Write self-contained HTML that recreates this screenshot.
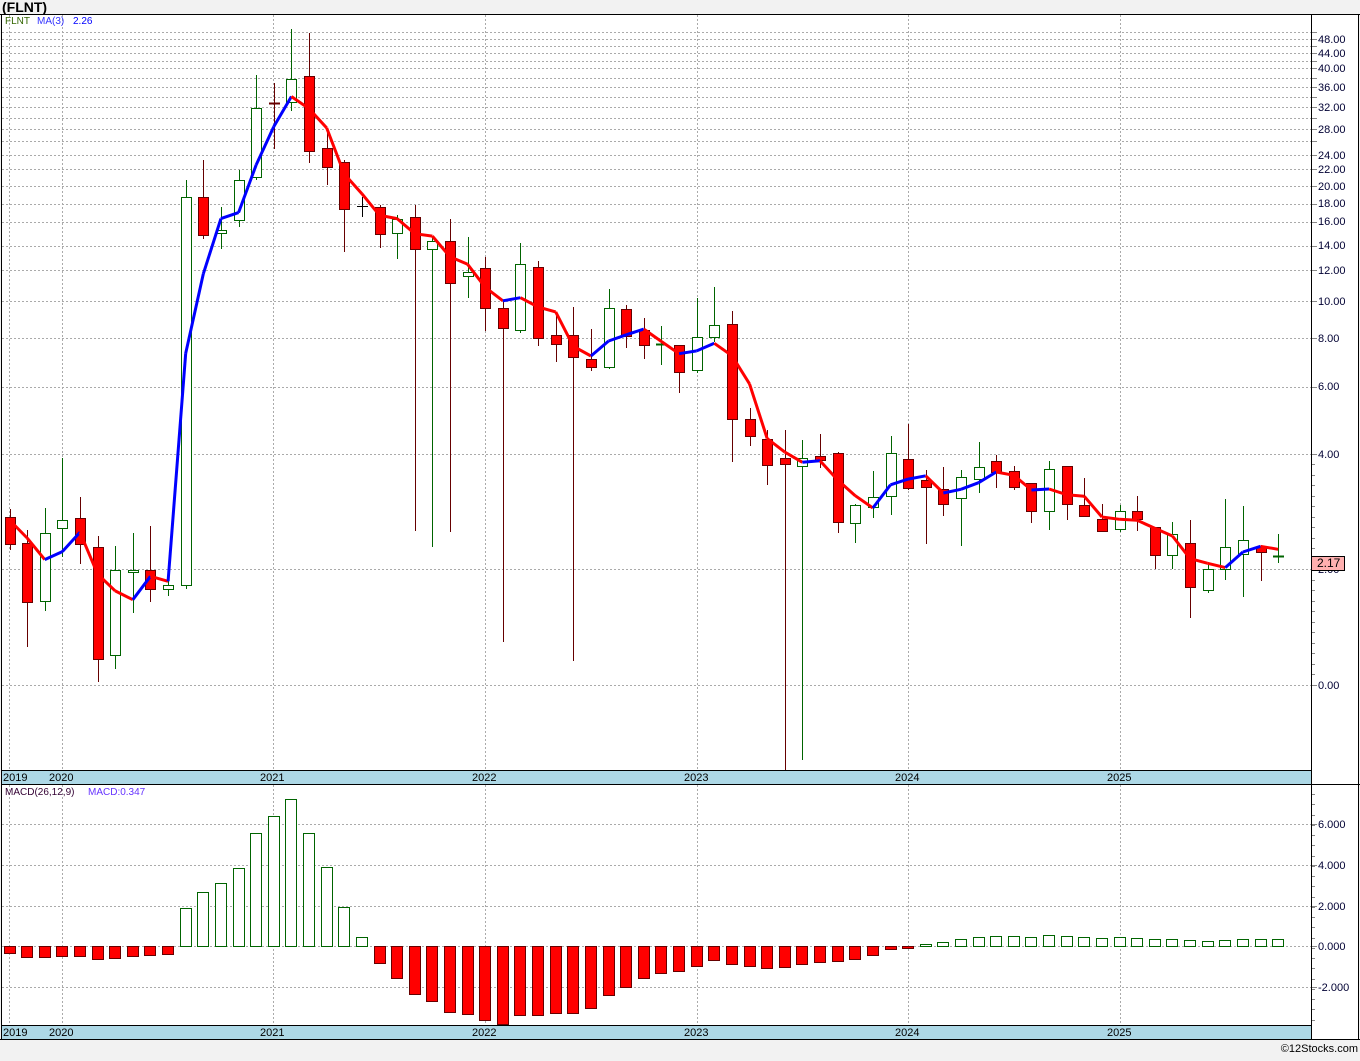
<!DOCTYPE html>
<html><head><meta charset="utf-8">
<style>
html,body{margin:0;padding:0;background:#f2f2f2;}
body{width:1360px;height:1056px;overflow:hidden;position:relative;font-family:"Liberation Sans",sans-serif;}
svg text{font-family:"Liberation Sans",sans-serif;}
</style></head>
<body>
<svg id="s" width="1360" height="1056" xmlns="http://www.w3.org/2000/svg">
<rect x="0" y="0" width="1360" height="1056" fill="#f2f2f2"/>
<text x="2" y="12" font-size="14" font-weight="bold" fill="#000">(FLNT)</text>
<rect x="1" y="14" width="1358" height="1026" fill="#fff"/>
<g id="g"></g>
</svg>
<script>
var g=document.getElementById('g'),h='';
function L(x1,y1,x2,y2,c,w,d){h+='<line x1="'+x1+'" y1="'+y1+'" x2="'+x2+'" y2="'+y2+'" stroke="'+c+'" stroke-width="'+(w||1)+'"'+(d?' stroke-dasharray="'+d+'"':'')+'/>';}
function T(x,y,t,c,s,a){h+='<text x="'+x+'" y="'+y+'" font-size="'+(s||11)+'" fill="'+c+'"'+(a?' text-anchor="'+a+'"':'')+'>'+t+'</text>';}
function R(x,y,w,hh,f,st){h+='<rect x="'+x+'" y="'+y+'" width="'+w+'" height="'+hh+'" fill="'+f+'" stroke="'+st+'" stroke-width="1"/>';}
var grid=[32,39,46,53,61,68,78,87,97,107,118,129,141,155,169,186,204,222,246,270,301,338,387,454,569,685];
grid.forEach(function(y){L(2,y+.5,1311,y+.5,'#aaa',1,'2,2');L(1311,y+.5,1317,y+.5,'#888',1);});
for(var y=464;y<685;y+=10.5){if(Math.abs(y-569)>4)L(1311,Math.round(y)+.5,1315,Math.round(y)+.5,'#888',1);}
var vx=[9,62,273,485,697,908,1120];
vx.forEach(function(x){L(x+.5,15,x+.5,770,'#aaa',1,'2,2');L(x+.5,785,x+.5,1025,'#aaa',1,'2,2');});
var labs=[[48,39],[44,53],[40,68],[36,87],[32,107],[28,129],[24,155],[22,169],[20,186],[18,203],[16,221],[14,245],[12,270],[10,301],[8,338],[6,386],[4,454],[2,569],[0,685]];
labs.forEach(function(l){T(1318,l[1]+4,l[0].toFixed(2),'#000033',11);});
[[6,824],[4,865],[2,906],[0,946],[-2,987]].forEach(function(m){L(2,m[1]+.5,1311,m[1]+.5,'#aaa',1,'2,2');L(1311,m[1]+.5,1317,m[1]+.5,'#888');T(1318,m[1]+4,m[0].toFixed(3),'#000033',11);});
for(var y=794;y<1025;y+=10.25){L(1311,Math.round(y)+.5,1315,Math.round(y)+.5,'#888');}
var C=[[509,517,544,550,'r'],[530,543,602,647,'r'],[508,533,601,611,'g'],[458,520,528,557,'g'],[497,518,544,564,'r'],[536,547,659,682,'r'],[546,570,655,669,'g'],[533,570,572,613,'g'],[526,570,589,602,'r'],[580,585,589,596,'g'],[180,197,585,589,'g'],[160,197,235,239,'r'],[207,230,233,249,'g'],[170,180,220,227,'g'],[75,108,177,180,'g'],[83,103,104,149,'d'],[29,79,102,111,'g'],[33,76,151,163,'r'],[133,148,167,185,'r'],[160,162,209,252,'r'],[197,206,207,217,'k'],[205,207,234,248,'r'],[215,219,233,259,'g'],[205,217,249,531,'r'],[238,241,249,547,'g'],[219,241,283,532,'r'],[237,272,276,298,'g'],[257,268,308,331,'r'],[302,308,328,642,'r'],[243,264,330,333,'g'],[261,267,338,346,'r'],[316,335,344,362,'r'],[307,335,357,661,'r'],[329,359,367,371,'r'],[289,308,367,369,'g'],[305,309,336,348,'r'],[318,330,345,359,'r'],[326,344,345,365,'gd'],[345,345,372,393,'r'],[298,337,370,373,'g'],[287,325,337,342,'g'],[311,324,419,462,'r'],[408,419,436,446,'r'],[430,439,465,485,'r'],[430,458,464,770,'r'],[440,458,466,760,'g'],[434,456,460,468,'r'],[452,453,522,533,'r'],[504,505,523,543,'g'],[471,497,507,518,'g'],[436,453,496,515,'g'],[424,459,488,490,'r'],[470,480,487,544,'r'],[467,489,504,516,'r'],[470,477,498,546,'g'],[442,467,479,493,'g'],[455,461,472,488,'r'],[466,471,487,490,'r'],[483,483,511,523,'r'],[461,469,511,530,'g'],[466,466,504,520,'r'],[478,505,516,516,'r'],[504,519,531,531,'r'],[505,511,529,532,'g'],[496,511,519,531,'r'],[527,527,555,569,'r'],[522,534,555,569,'g'],[520,543,587,618,'r'],[563,569,590,593,'g'],[499,547,569,580,'g'],[506,540,554,597,'g'],[545,547,552,581,'r'],[534,556,557,563,'gd']];
var dx=17.62,x0=9.5;
var tb=[[39,48],[68,40],[87,36],[107,32],[129,28],[155,24],[169,22],[186,20],[203,18],[221,16],[245,14],[270,12],[301,10],[338,8],[386,6],[454,4],[569,2],[685,0]];
function y2p(y){if(y<=tb[0][0])return tb[0][1];for(var i=0;i<tb.length-1;i++){if(y<=tb[i+1][0]){var a=tb[i],b=tb[i+1];return a[1]+(y-a[0])/(b[0]-a[0])*(b[1]-a[1]);}}return 0;}
function p2y(p){for(var i=0;i<tb.length-1;i++){var a=tb[i],b=tb[i+1];if(p<=a[1]&&p>=b[1])return a[0]+(a[1]-p)/(a[1]-b[1])*(b[0]-a[0]);}return tb[0][0];}
var closes=[];
C.forEach(function(c,i){
 var x=x0+i*dx,t=c[4],xc=Math.round(x)+.5,bx=Math.round(x)-5+.5;
 var cl=(t=='r')?c[2]:c[1];closes.push(cl);
 if(t=='r'){L(xc,c[0],xc,c[3],'#660000');R(bx,c[1]+.5,10,Math.max(c[2]-c[1],2),'#ff0000','#660000');}
 else if(t=='g'){L(xc,c[0],xc,c[3],'#006400');R(bx,c[1]+.5,10,Math.max(c[2]-c[1],2),'#fff','#006400');}
 else if(t=='gd'){L(xc,c[0],xc,c[3],'#006400');L(Math.round(x)-5,c[1]+.5,Math.round(x)+6,c[1]+.5,'#006400',2);}
 else if(t=='d'){L(xc,c[0],xc,c[3],'#660000');L(Math.round(x)-5,c[1]+.5,Math.round(x)+6,c[1]+.5,'#660000',2);}
 else {L(xc,c[0],xc,c[3],'#000');L(Math.round(x)-5,c[1]+.5,Math.round(x)+6,c[1]+.5,'#000',1);}
});
var ma=[[x0,520],[x0+dx,538]];
for(var i=2;i<C.length;i++){var p=(y2p(closes[i])+y2p(closes[i-1])+y2p(closes[i-2]))/3;ma.push([x0+i*dx,p2y(p)]);}
for(var i=0;i<ma.length-1;i++){var a=ma[i],b=ma[i+1];L(a[0],a[1].toFixed(1),b[0],b[1].toFixed(1),b[1]>a[1]?'#ff0000':'#0000ff',3);}
var M=[953,957,957,956,956,959,958,956,955,954,908,892,883,868,833,816,799,833,867,907,937,963,978,994,1001,1012,1014,1020,1024,1015,1015,1013,1013,1008,995,987,978,973,971,966,960,964,966,968,967,964,962,961,959,955,949,948,944,942,939,937,936,936,937,935,936,937,938,937,938,939,939,940,941,940,939,939,939];
M.forEach(function(v,i){var x=Math.round(x0+i*dx)-5.5;
 if(v>946||i==51){R(x,946.5,11,Math.max(v-946,2),'#ff0000','#660000');}
 else R(x,v+.5,11,946-v,'#fff','#006400');});
h+='<rect x="1.5" y="770.5" width="1310" height="14" fill="#add8e6" stroke="#000"/>';
h+='<rect x="1.5" y="1025.5" width="1310" height="14" fill="#add8e6" stroke="#000"/>';
var yl=[[3,'2019'],[49,'2020'],[260,'2021'],[472,'2022'],[684,'2023'],[895,'2024'],[1107,'2025']];
yl.forEach(function(l){T(l[0],781,l[1],'#000',11);T(l[0],1036,l[1],'#000',11);});
L(0,14.5,1360,14.5,'#000');L(1.5,14,1.5,1040,'#000');L(1311.5,14,1311.5,1040,'#000');L(1358.5,14,1358.5,1040,'#000');
L(1311,784.5,1360,784.5,'#000');L(0,1039.5,1360,1039.5,'#000');
T(5,24,'FLNT','#336600',10);T(37,24,'MA(3)','#3333ff',10);T(73,24,'2.26','#0000ff',10);
T(5,795,'MACD(26,12,9)','#330033',10);T(88,795,'MACD:0.347','#6633ff',10);
h+='<rect x="1311.5" y="556.5" width="33" height="14" fill="#ffb0b0" stroke="#000"/>';
T(1317,567,'2.17','#000',12);
T(1358,1052,'©12Stocks.com','#000',11,'end');
g.innerHTML=h;
</script>
</body></html>
